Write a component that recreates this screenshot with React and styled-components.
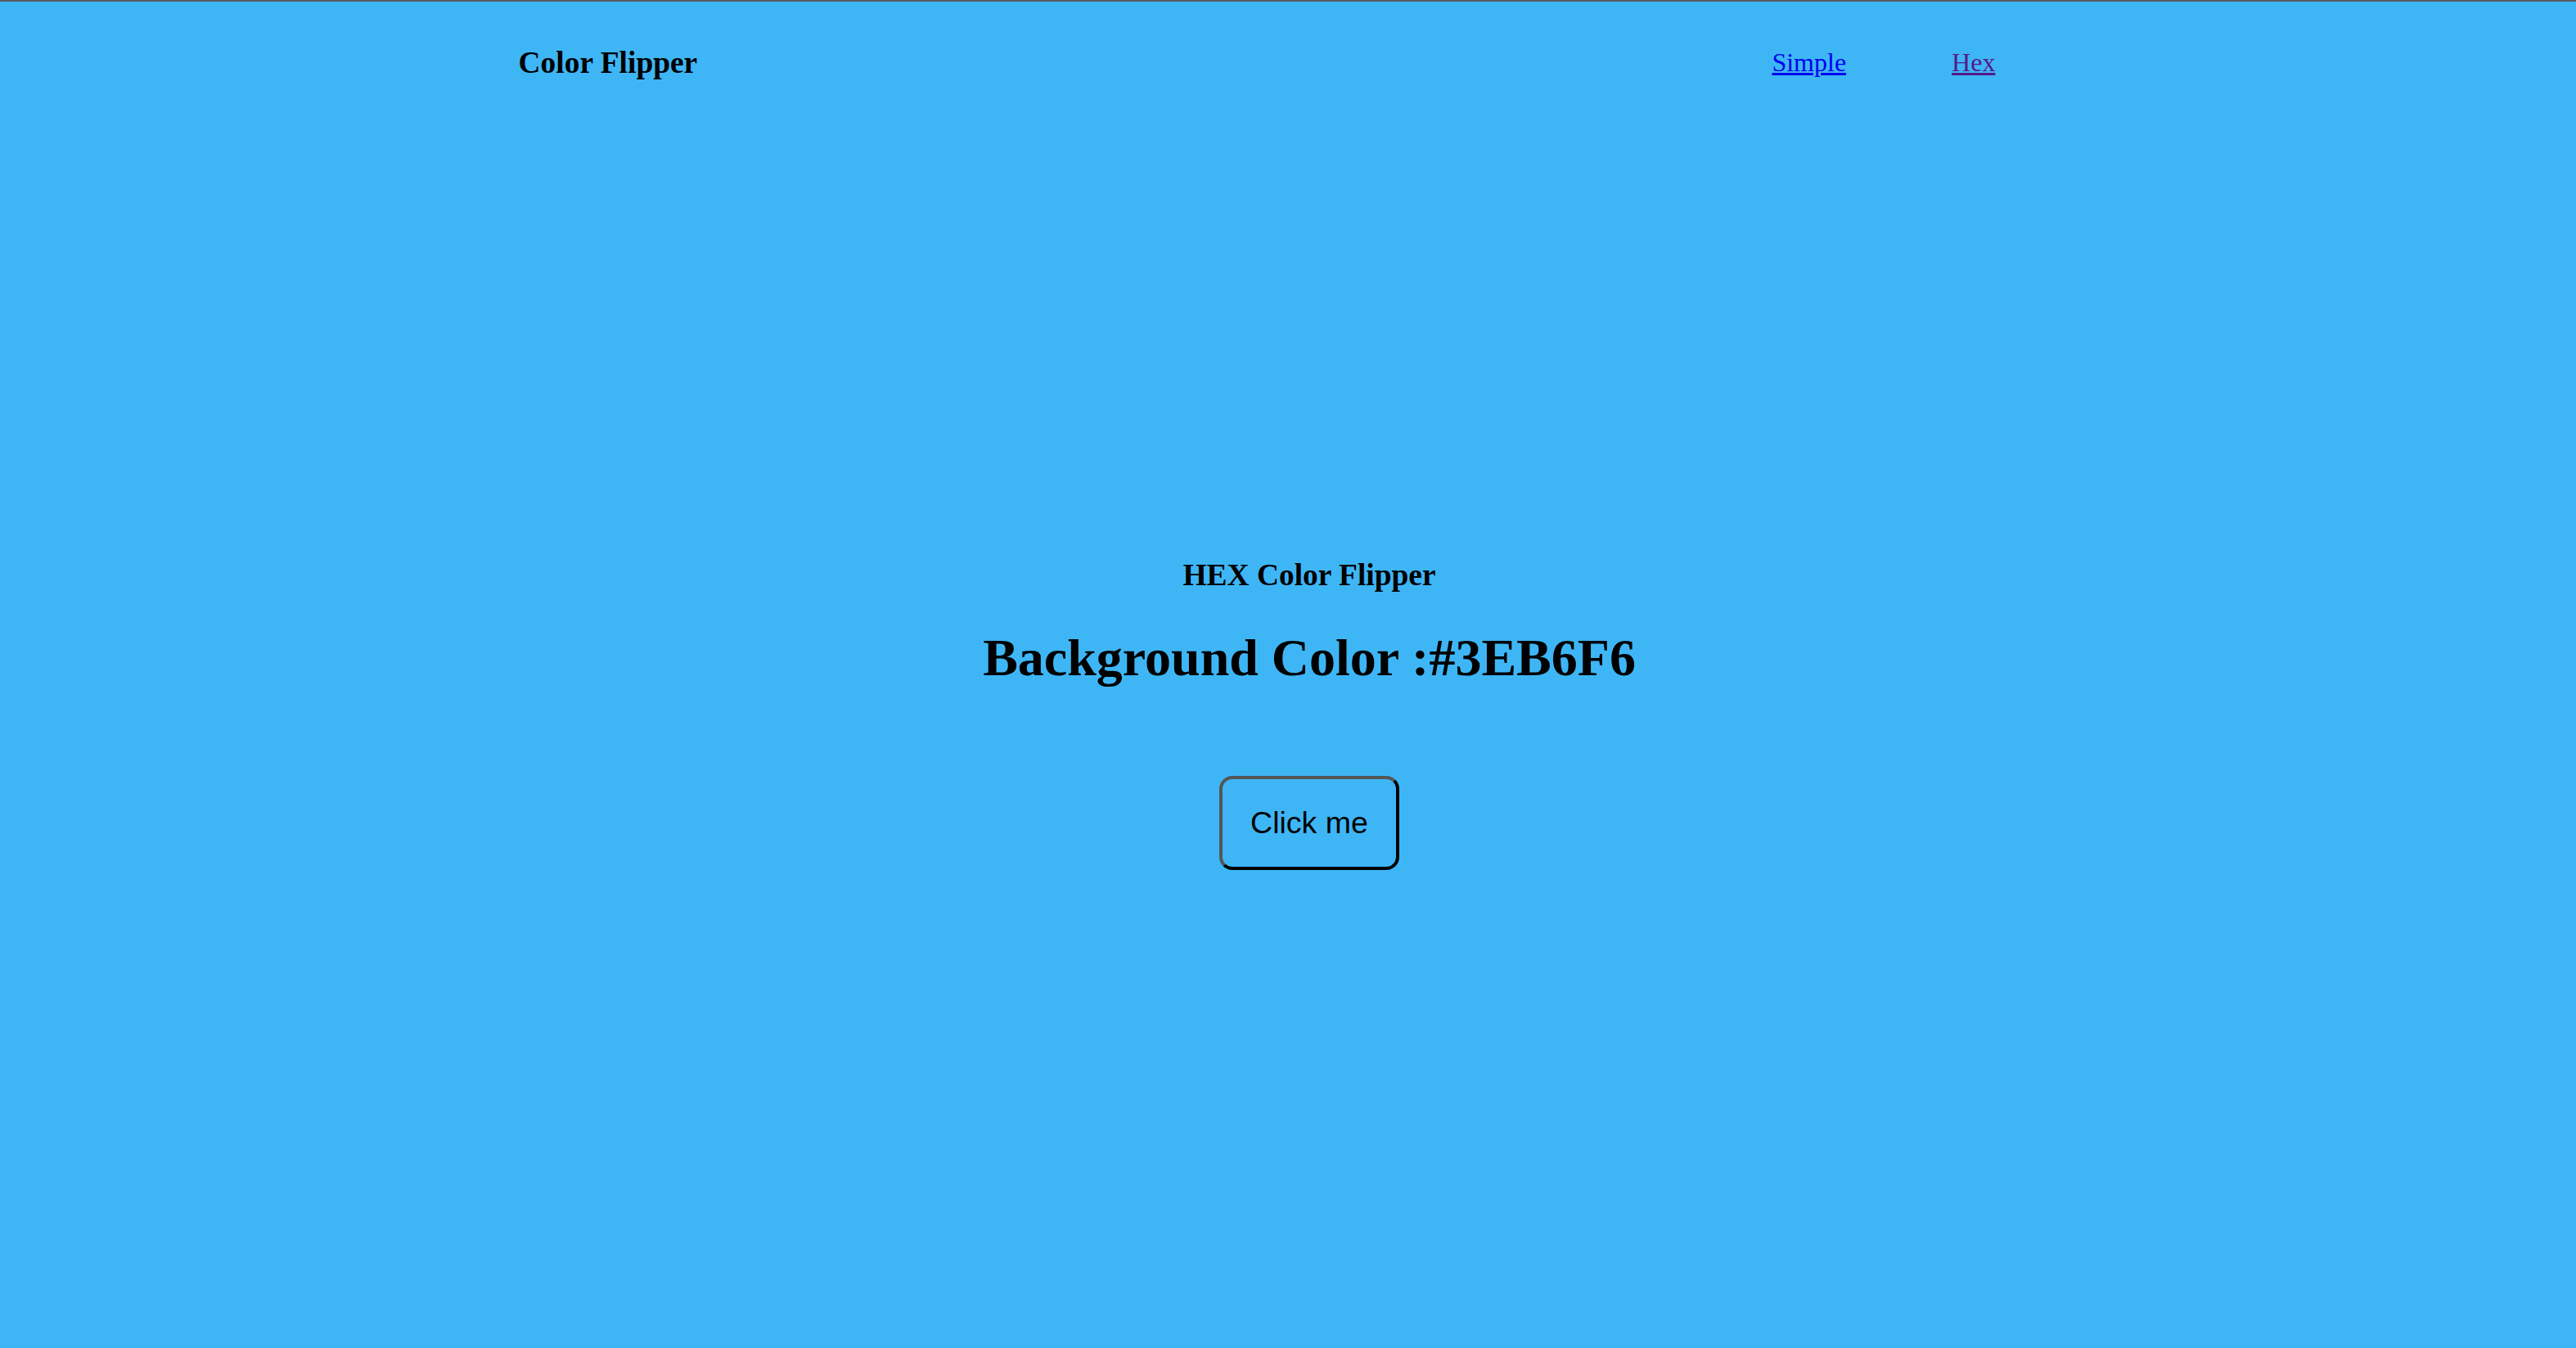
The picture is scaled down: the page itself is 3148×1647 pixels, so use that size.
import { useState } from "react";
import styled, { createGlobalStyle } from "styled-components";

const GlobalStyle = createGlobalStyle`
  html, body {
    margin: 0;
    padding: 0;
  }
  body {
    border-top: 2px solid #5a5a5e;
    font-family: "Liberation Serif", "Times New Roman", serif;
    color: #000;
  }
`;

const Container = styled.div`
  width: 100%;
  min-height: 1645px;
  background-color: ${(props) => props.$bg};
`;

const Nav = styled.nav`
  width: 60%;
  margin: 0 auto;
  padding-top: 53px;
  display: flex;
  align-items: center;
  justify-content: space-between;
`;

const Logo = styled.h3`
  margin: 0;
  padding-left: 4px;
  font-size: 37.44px;
  font-weight: 700;
`;

const Links = styled.ul`
  display: flex;
  gap: 129px;
  list-style: none;
  margin: 0;
  padding: 0 80px 0 0;

  a {
    font-size: 32px;
    color: #0000ee;
    text-decoration: underline;
  }
  a.visited {
    color: #551a8b;
  }
`;

const Main = styled.main`
  margin-top: 583px;
  padding-left: 52px;
  text-align: center;
`;

const SubTitle = styled.h3`
  margin: 0;
  font-size: 37.44px;
  font-weight: 700;
`;

const ColorText = styled.h1`
  margin: 43px 0 0;
  font-size: 64px;
  font-weight: 700;
`;

const Button = styled.button`
  margin-top: 107px;
  padding: 32px 34px;
  font-family: "Liberation Sans", Arial, sans-serif;
  font-size: 37.5px;
  color: #000;
  background: transparent;
  border: 4px solid;
  border-color: #555555 #000 #000 #555555;
  border-radius: 16px;
  cursor: pointer;
`;

// 랜덤 hex 색상 만들기
const hexChars = "0123456789ABCDEF";
const randomHex = () => {
  let hex = "#";
  for (let i = 0; i < 6; i++) {
    hex += hexChars[Math.floor(Math.random() * 16)];
  }
  return hex;
};

export default function App() {
  const [color, setColor] = useState("#3EB6F6");

  return (
    <>
      <GlobalStyle />
      <Container $bg={color}>
        <Nav>
          <Logo>Color Flipper</Logo>
          <Links>
            <li>
              <a href="#simple">Simple</a>
            </li>
            <li>
              <a href="#hex" className="visited">
                Hex
              </a>
            </li>
          </Links>
        </Nav>

        <Main>
          <SubTitle>HEX Color Flipper</SubTitle>
          <ColorText>Background Color :{color}</ColorText>
          <Button onClick={() => setColor(randomHex())}>Click me</Button>
        </Main>
      </Container>
    </>
  );
}
